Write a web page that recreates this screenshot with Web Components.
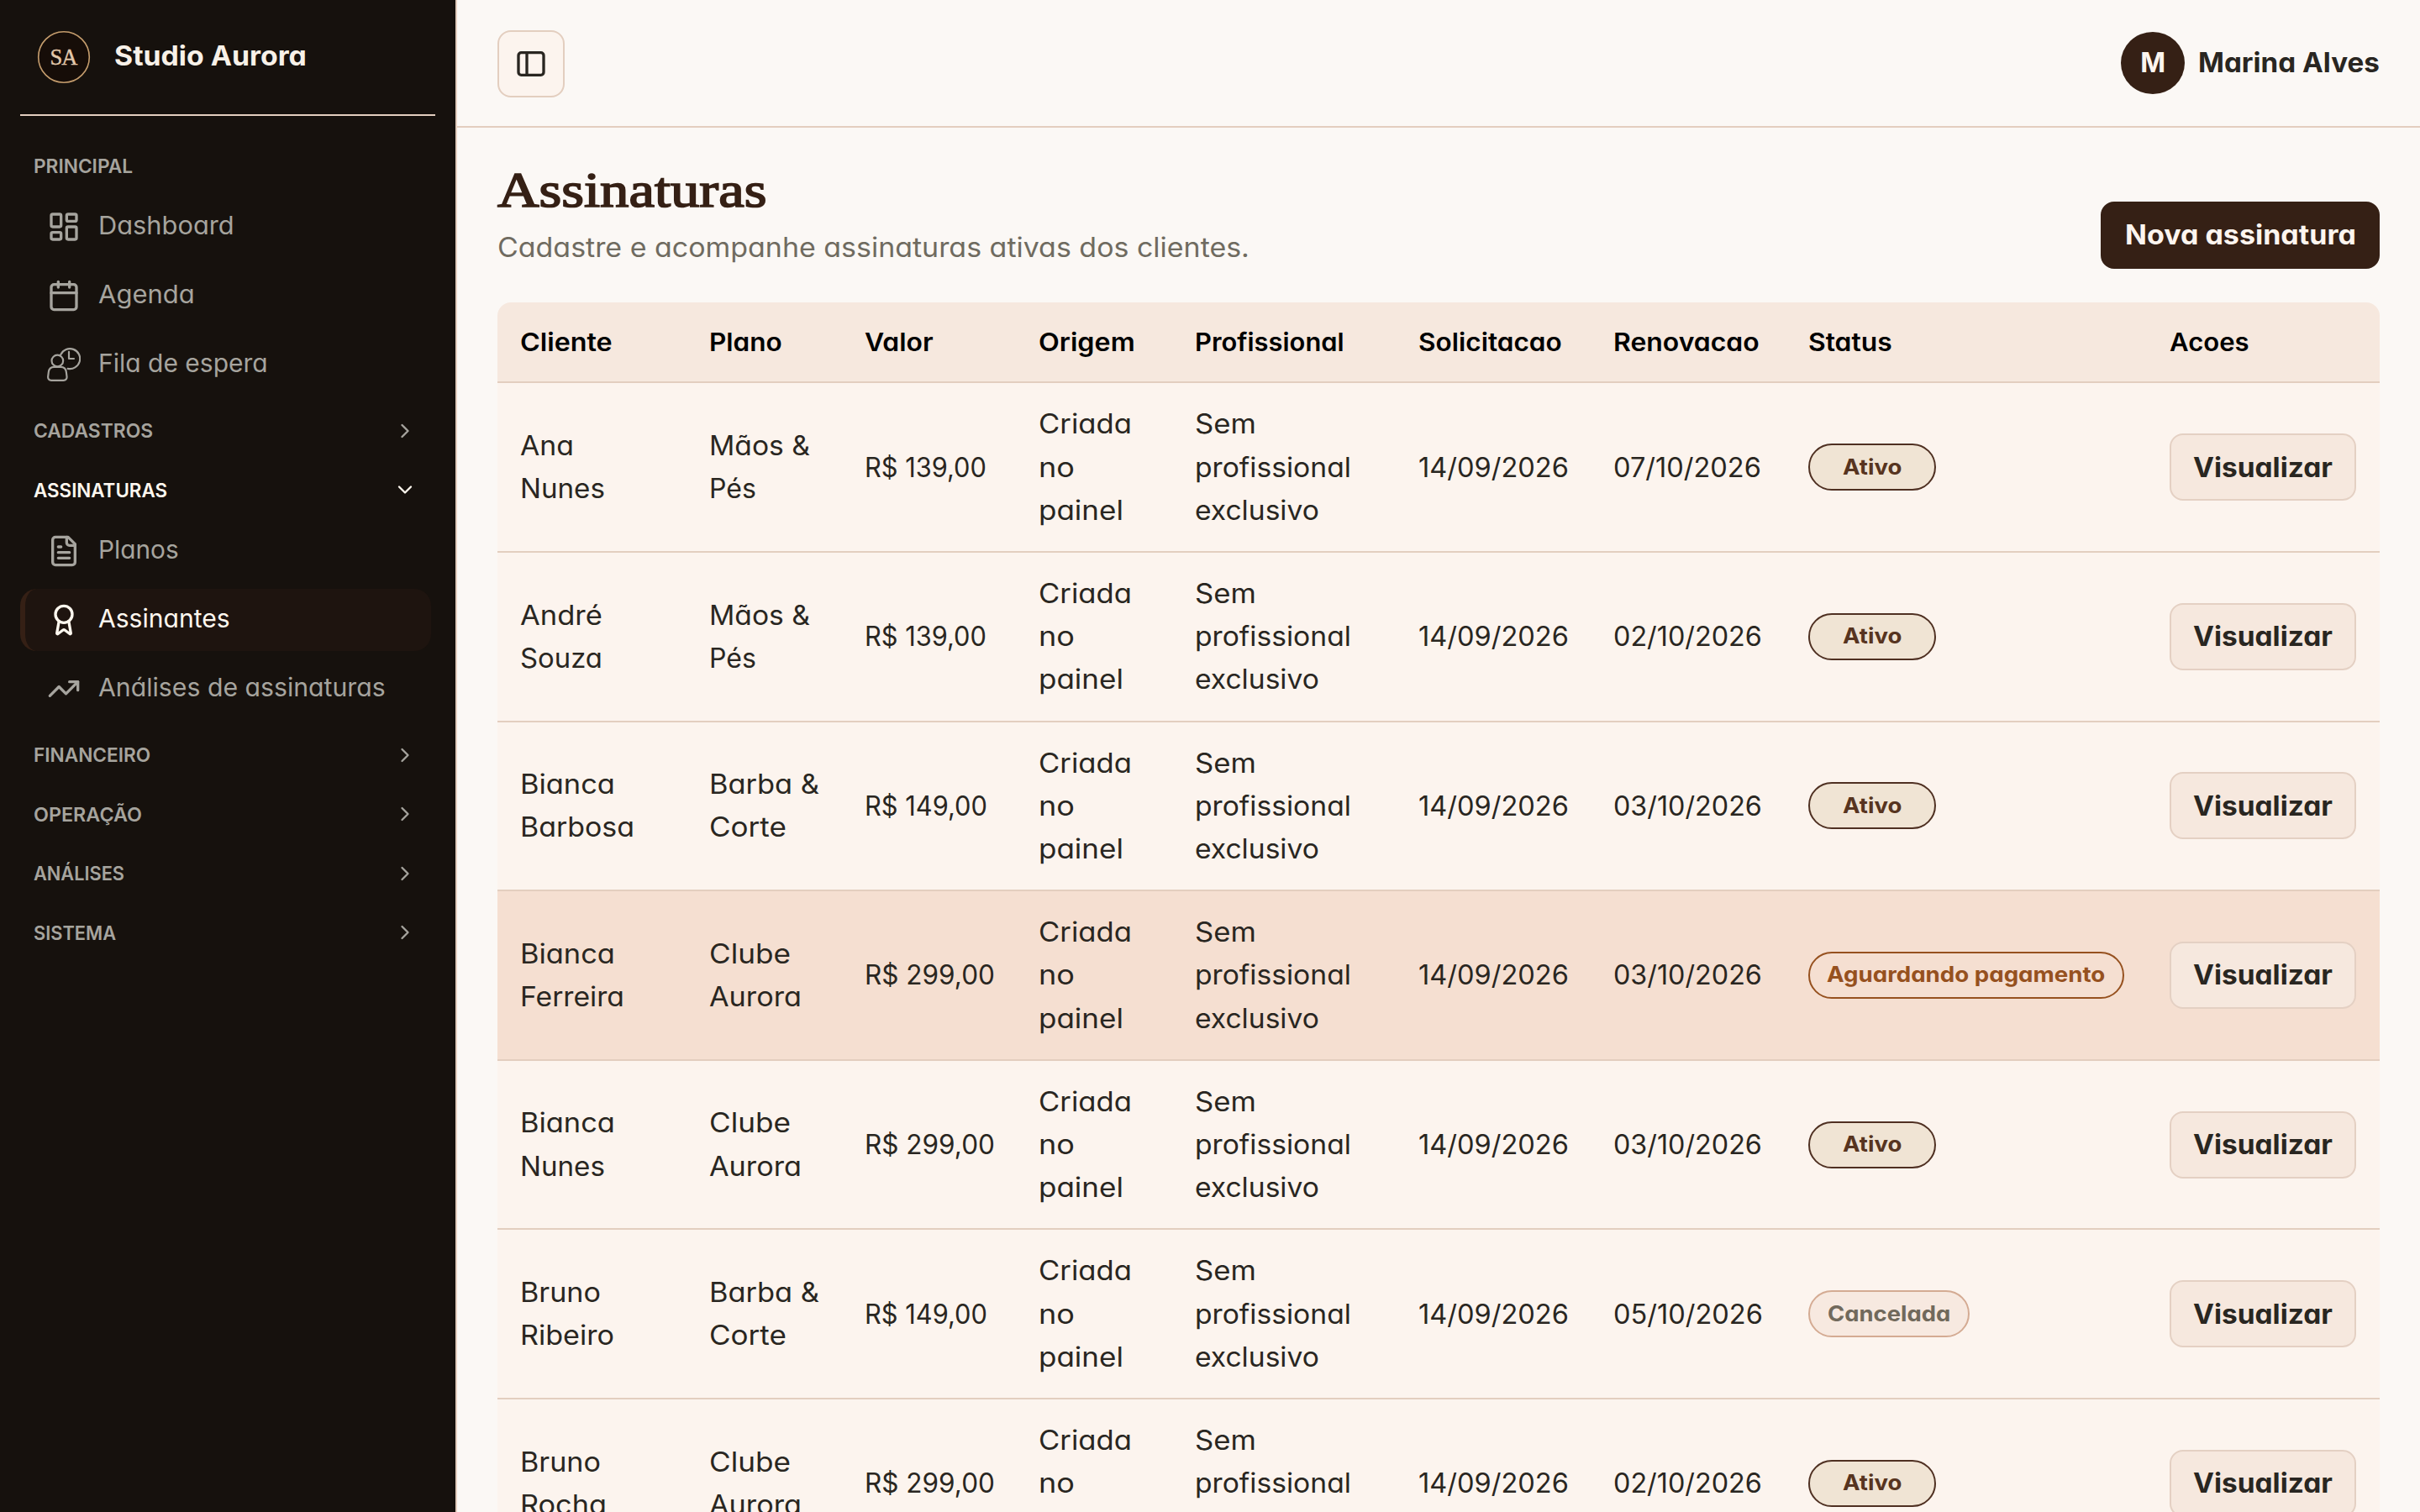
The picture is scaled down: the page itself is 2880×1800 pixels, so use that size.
<!DOCTYPE html>
<html lang="pt-BR">
<head>
<meta charset="utf-8">
<title>Assinaturas</title>
<style>
    html, body { margin: 0; height: 100%; overflow: hidden; }
    body {
        --line: #e3cebf;
        --ink: #292621;
        --brown: #352015;
        --soft: #f6e8de;
        background: #fbf8f5;
        color: var(--ink);
        font: 400 32px/51.2px Inter, "Open Sans", sans-serif;
        font-feature-settings: "cv11";
    }
</style>
</head>
<body>
<studio-app></studio-app>

<script>
const ICONS = {
    dashboard: `<rect x="3" y="3" width="7" height="9" rx="1"/><rect x="14" y="3" width="7" height="5" rx="1"/><rect x="14" y="12" width="7" height="9" rx="1"/><rect x="3" y="16" width="7" height="5" rx="1"/>`,
    calendar: `<path d="M8 2v4M16 2v4M3 10h18"/><rect x="3" y="4" width="18" height="18" rx="2"/>`,
    waiting: `<g stroke-width="1.3"><circle cx="7.4" cy="9.3" r="4.1"/><path d="M5 13.7h4.8c2.4 0 3.6 1.4 3.9 3.6l.4 3.2c.2 1.6-.7 2.8-2.4 2.8H3.1c-1.7 0-2.6-1.2-2.4-2.8l.4-3.2c.3-2.2 1.5-3.6 3.9-3.6z"/><path d="M9.8 4.8a7.2 7.2 0 1 1 5 10.1M15.6 2.9v4.9h3.6"/></g>`,
    file: `<path d="M15 2H6a2 2 0 0 0-2 2v16a2 2 0 0 0 2 2h12a2 2 0 0 0 2-2V7Z"/><path d="M14 2v4a2 2 0 0 0 2 2h4M10 9H8M16 13H8M16 17H8"/>`,
    award: `<path d="m15.477 12.89 1.515 8.526a.5.5 0 0 1-.81.47l-3.58-2.687a1 1 0 0 0-1.197 0l-3.586 2.686a.5.5 0 0 1-.81-.469l1.514-8.526"/><circle cx="12" cy="8" r="6"/>`,
    trend: `<path d="m22 7-8.5 8.5-5-5L2 17"/><path d="M16 7h6v6"/>`,
    right: `<path d="m9 18 6-6-6-6"/>`,
    down: `<path d="m6 9 6 6 6-6"/>`,
    panel: `<rect x="3" y="4" width="18" height="16" rx="2"/><path d="M9 4v16"/>`
};

class UiIcon extends HTMLElement {
    connectedCallback() {
        this.attachShadow({mode: "open"}).innerHTML = `
            <style>
                :host { display: block; flex: none; width: 40px; height: 40px; }
                svg { display: block; width: 100%; height: 100%; }
            </style>
            <svg viewBox="0 0 24 24" fill="none" stroke="currentColor" stroke-width="2"
                stroke-linecap="round" stroke-linejoin="round">${ICONS[this.getAttribute("name")]}</svg>
        `;
    }
}

// One line of text, widened so that it takes up the given width
class UiText extends HTMLElement {
    connectedCallback() {
        this.attachShadow({mode: "open"}).innerHTML = `
            <style>
                :host { display: block; white-space: nowrap; }
                span { display: inline-block; transform-origin: 0 50%; }
            </style>
            <span><slot></slot></span>
        `;
        const width = Number(this.getAttribute("w"));
        if (!width) return;
        const $span = this.shadowRoot.querySelector("span");
        // Side bearings are not part of the visible width
        const total = width + parseFloat(getComputedStyle(this).fontSize) * 0.09;
        $span.style.transform = `scaleX(${total / $span.getBoundingClientRect().width})`;
        this.style.width = `${total}px`;
    }
}

class NavItem extends HTMLElement {
    connectedCallback() {
        this.attachShadow({mode: "open"}).innerHTML = `
            <style>
                :host {
                    display: flex;
                    align-items: center;
                    box-sizing: border-box;
                    width: 489px;
                    height: 74px;
                    margin-bottom: 8px;
                    padding-left: 26px;
                    gap: 21px;
                    border-left: 6px solid transparent;
                    border-radius: 20px;
                    font-size: 30px;
                    color: #a6a49e;
                }
                :host(:last-child) { margin-bottom: 7px; }
                :host([active]) {
                    background: #1e140f;
                    border-color: #352015;
                    color: #fff8ef;
                }
                ui-text { padding-bottom: 2px; }
            </style>
            <ui-icon name="${this.getAttribute("icon")}"></ui-icon>
            <ui-text w="${this.getAttribute("w")}">${this.getAttribute("label")}</ui-text>
        `;
    }
}

class NavGroup extends HTMLElement {
    connectedCallback() {
        const open = this.hasAttribute("open");
        const plain = this.hasAttribute("plain");
        this.attachShadow({mode: "open"}).innerHTML = `
            <style>
                :host { display: block; }
                .head {
                    display: flex;
                    align-items: center;
                    justify-content: space-between;
                    height: 70.5px;
                    padding: 0 22px 0 16px;
                    font-size: 22.5px;
                    font-weight: 600;
                    color: #a6a49e;
                }
                :host([open]) .head { color: #fff8ef; }
                ui-icon { width: 28px; height: 28px; }
            </style>
            <div class="head">
                <ui-text w="${this.getAttribute("w")}">${this.getAttribute("label")}</ui-text>
                ${plain ? "" : `<ui-icon name="${open ? "down" : "right"}"></ui-icon>`}
            </div>
            <slot></slot>
        `;
    }
}

class SideBar extends HTMLElement {
    connectedCallback() {
        this.attachShadow({mode: "open"}).innerHTML = `
            <style>
                :host {
                    display: block;
                    box-sizing: border-box;
                    flex: none;
                    width: 544px;
                    padding: 0 24px;
                    background: #16110d;
                    border-right: 2px solid var(--line);
                }
                .brand {
                    display: flex;
                    align-items: center;
                    box-sizing: border-box;
                    height: 138px;
                    padding: 0 0 0 20px;
                    gap: 28px;
                    border-bottom: 2px solid var(--line);
                    font-weight: 700;
                    color: #f8f1e8;
                }
                .brand svg { width: 64px; height: 64px; }
                .brand ui-text { padding-bottom: 2px; }
                nav { padding-top: 24px; }
            </style>
            <div class="brand">
                <svg viewBox="0 0 64 64">
                    <circle cx="32" cy="32" r="30.3" fill="#160d08" stroke="#c59d6d" stroke-width="1.6"/>
                    <text x="31.5" y="41" text-anchor="middle" font-family="Liberation Serif, serif"
                        font-size="26.5" font-weight="400" letter-spacing="-1" fill="#e3c8ab" stroke="#e3c8ab" stroke-width=".4">SA</text>
                </svg>
                <ui-text w="226">Studio Aurora</ui-text>
            </div>
            <nav>
                <nav-group label="PRINCIPAL" w="116" plain>
                    <nav-item icon="dashboard" w="159" label="Dashboard"></nav-item>
                    <nav-item icon="calendar" w="112" label="Agenda"></nav-item>
                    <nav-item icon="waiting" w="199" label="Fila de espera"></nav-item>
                </nav-group>
                <nav-group label="CADASTROS" w="140"></nav-group>
                <nav-group label="ASSINATURAS" w="157" open>
                    <nav-item icon="file" w="93" label="Planos"></nav-item>
                    <nav-item icon="award" w="154" label="Assinantes" active></nav-item>
                    <nav-item icon="trend" w="339" label="Análises de assinaturas"></nav-item>
                </nav-group>
                <nav-group label="FINANCEIRO" w="137"></nav-group>
                <nav-group label="OPERAÇÃO" w="127"></nav-group>
                <nav-group label="ANÁLISES" w="106"></nav-group>
                <nav-group label="SISTEMA" w="96"></nav-group>
            </nav>
        `;
    }
}

class TopBar extends HTMLElement {
    connectedCallback() {
        this.attachShadow({mode: "open"}).innerHTML = `
            <style>
                :host {
                    display: flex;
                    align-items: center;
                    justify-content: space-between;
                    box-sizing: border-box;
                    height: 152px;
                    padding: 0 48px;
                    border-bottom: 2px solid var(--line);
                }
                .toggle {
                    display: grid;
                    place-items: center;
                    box-sizing: border-box;
                    width: 80px;
                    height: 80px;
                    margin-top: 2px;
                    border: 2px solid var(--line);
                    border-radius: 16px;
                    background: #fcf4ee;
                }
                .user { display: flex; align-items: center; gap: 16px; font-weight: 650; }
                .avatar {
                    display: grid;
                    place-items: center;
                    width: 76px;
                    height: 74px;
                    border-radius: 50%;
                    background: var(--brown);
                    color: #fdf5ef;
                    font-weight: 700;
                }
            </style>
            <div class="toggle"><ui-icon name="panel"></ui-icon></div>
            <div class="user">
                <div class="avatar">M</div>
                <ui-text w="213">Marina Alves</ui-text>
            </div>
        `;
    }
}

class UiButton extends HTMLElement {
    connectedCallback() {
        this.attachShadow({mode: "open"}).innerHTML = `
            <style>
                :host {
                    display: flex;
                    align-items: center;
                    justify-content: center;
                    box-sizing: border-box;
                    width: 222px;
                    height: 80px;
                    border: 2px solid #e4d0c3;
                    border-radius: 16px;
                    background: var(--soft);
                    font-weight: 700;
                }
                :host([primary]) {
                    width: 332px;
                    border-color: var(--brown);
                    background: var(--brown);
                    color: #fdf5ef;
                }
            </style>
            <ui-text w="${this.getAttribute("w")}">${this.getAttribute("label")}</ui-text>
        `;
    }
}

class StatusPill extends HTMLElement {
    connectedCallback() {
        const kinds = {
            "Ativo": [68, 152],
            "Aguardando pagamento": [329, 376],
            "Cancelada": [144, 192]
        };
        const label = this.getAttribute("label");
        const [textWidth, width] = kinds[label];
        this.attachShadow({mode: "open"}).innerHTML = `
            <style>
                :host {
                    display: flex;
                    align-items: center;
                    justify-content: center;
                    box-sizing: border-box;
                    width: ${width}px;
                    height: 56px;
                    padding-bottom: 2px;
                    border: 2px solid #4f3022;
                    border-radius: 28px;
                    background: #f0e4d4;
                    font-size: 25.6px;
                    font-weight: 700;
                    color: #573420;
                }
                :host([label^="Aguardando"]) { background: none; border-color: #96511f; color: #96511f; }
                :host([label="Cancelada"]) { background: #f7e9e0; border-color: #d4ab93; color: #71695c; }
            </style>
            <ui-text w="${textWidth}">${label}</ui-text>
        `;
    }
}

const T = {
    "Ana": 61, "Nunes": 98, "André": 95, "Souza": 95, "Bianca": 110, "Barbosa": 133,
    "Ferreira": 121, "Bruno": 93, "Ribeiro": 109, "Rocha": 100,
    "Mãos &": 117, "Pés": 53, "Barba &": 128, "Corte": 89, "Clube": 94, "Aurora": 107,
    "R$ 139,00": 142, "R$ 149,00": 143, "R$ 299,00": 152,
    "Criada": 108, "no": 40, "painel": 98, "Sem": 70, "profissional": 183, "exclusivo": 145,
    "14/09/2026": 176, "07/10/2026": 173, "02/10/2026": 174, "03/10/2026": 174, "05/10/2026": 175
};

const HEADS = [["Cliente", 107], ["Plano", 84], ["Valor", 79], ["Origem", 112], ["Profissional", 175],
    ["Solicitacao", 168], ["Renovacao", 171], ["Status", 97], ["Acoes", 92]];

const ROWS = [
    ["Ana|Nunes", "Mãos &|Pés", "R$ 139,00", "07/10/2026", "Ativo"],
    ["André|Souza", "Mãos &|Pés", "R$ 139,00", "02/10/2026", "Ativo"],
    ["Bianca|Barbosa", "Barba &|Corte", "R$ 149,00", "03/10/2026", "Ativo"],
    ["Bianca|Ferreira", "Clube|Aurora", "R$ 299,00", "03/10/2026", "Aguardando pagamento"],
    ["Bianca|Nunes", "Clube|Aurora", "R$ 299,00", "03/10/2026", "Ativo"],
    ["Bruno|Ribeiro", "Barba &|Corte", "R$ 149,00", "05/10/2026", "Cancelada"],
    ["Bruno|Rocha", "Clube|Aurora", "R$ 299,00", "02/10/2026", "Ativo"]
];

class SubsTable extends HTMLElement {
    _cell(text) {
        const lines = text.split("|").map(line => `<ui-text w="${T[line]}">${line}</ui-text>`);
        return `<div>${lines.join("")}</div>`;
    }

    _row([client, plan, price, renewal, status]) {
        return `
            <div class="row ${status.startsWith("Aguardando") ? "pending" : ""}">
                ${[client, plan, price, "Criada|no|painel", "Sem|profissional|exclusivo", "14/09/2026", renewal]
                    .map(text => this._cell(text)).join("")}
                <div><status-pill label="${status}"></status-pill></div>
                <div><ui-button w="163" label="Visualizar"></ui-button></div>
            </div>
        `;
    }

    connectedCallback() {
        this.attachShadow({mode: "open"}).innerHTML = `
            <style>
                :host { display: block; overflow: hidden; border-radius: 16px 16px 0 0; }
                .row {
                    display: grid;
                    grid-template-columns: 224px 185px 207px 186px 265.5px 232px 232.5px 430px 278px;
                    align-items: center;
                    box-sizing: border-box;
                    height: 201.6px;
                    border-bottom: 2px solid var(--line);
                    background: #fcf4ee;
                }
                .row > div { padding-left: 28px; }
                .row > div:first-child { padding-left: 27px; }
                .head { height: 96.4px; background: var(--soft); color: #000; font-size: 30px; font-weight: 600; }
                .head ui-text { padding-top: 1px; }
                .pending { background: #f5dfd1; }
            </style>
            <div class="row head">
                ${HEADS.map(([label, w]) => `<div><ui-text w="${w}">${label}</ui-text></div>`).join("")}
            </div>
            ${ROWS.map(row => this._row(row)).join("")}
        `;
    }
}

class StudioApp extends HTMLElement {
    connectedCallback() {
        this.attachShadow({mode: "open"}).innerHTML = `
            <style>
                :host { display: flex; height: 1800px; overflow: hidden; }
                main { flex: 1; min-width: 0; }
                .page { padding: 40px 48px 0; }
                .intro {
                    display: flex;
                    align-items: flex-end;
                    justify-content: space-between;
                    height: 128px;
                    margin-bottom: 40px;
                }
                h1 {
                    margin: 0 0 8px;
                    font: 400 60px/70px "Liberation Serif", serif;
                    color: var(--brown);
                    -webkit-text-stroke: 1.7px var(--brown);
                }
                .lead { color: #6f6b60; line-height: 51px; }
            </style>
            <side-bar></side-bar>
            <main>
                <top-bar></top-bar>
                <div class="page">
                    <div class="intro">
                        <div>
                            <h1><ui-text w="315">Assinaturas</ui-text></h1>
                            <ui-text class="lead" w="892">Cadastre e acompanhe assinaturas ativas dos clientes.</ui-text>
                        </div>
                        <ui-button primary w="272" label="Nova assinatura"></ui-button>
                    </div>
                    <subs-table></subs-table>
                </div>
            </main>
        `;
    }
}

customElements.define("ui-icon", UiIcon);
customElements.define("ui-text", UiText);
customElements.define("ui-button", UiButton);
customElements.define("status-pill", StatusPill);
customElements.define("nav-item", NavItem);
customElements.define("nav-group", NavGroup);
customElements.define("side-bar", SideBar);
customElements.define("top-bar", TopBar);
customElements.define("subs-table", SubsTable);
customElements.define("studio-app", StudioApp);
</script>
</body>
</html>
